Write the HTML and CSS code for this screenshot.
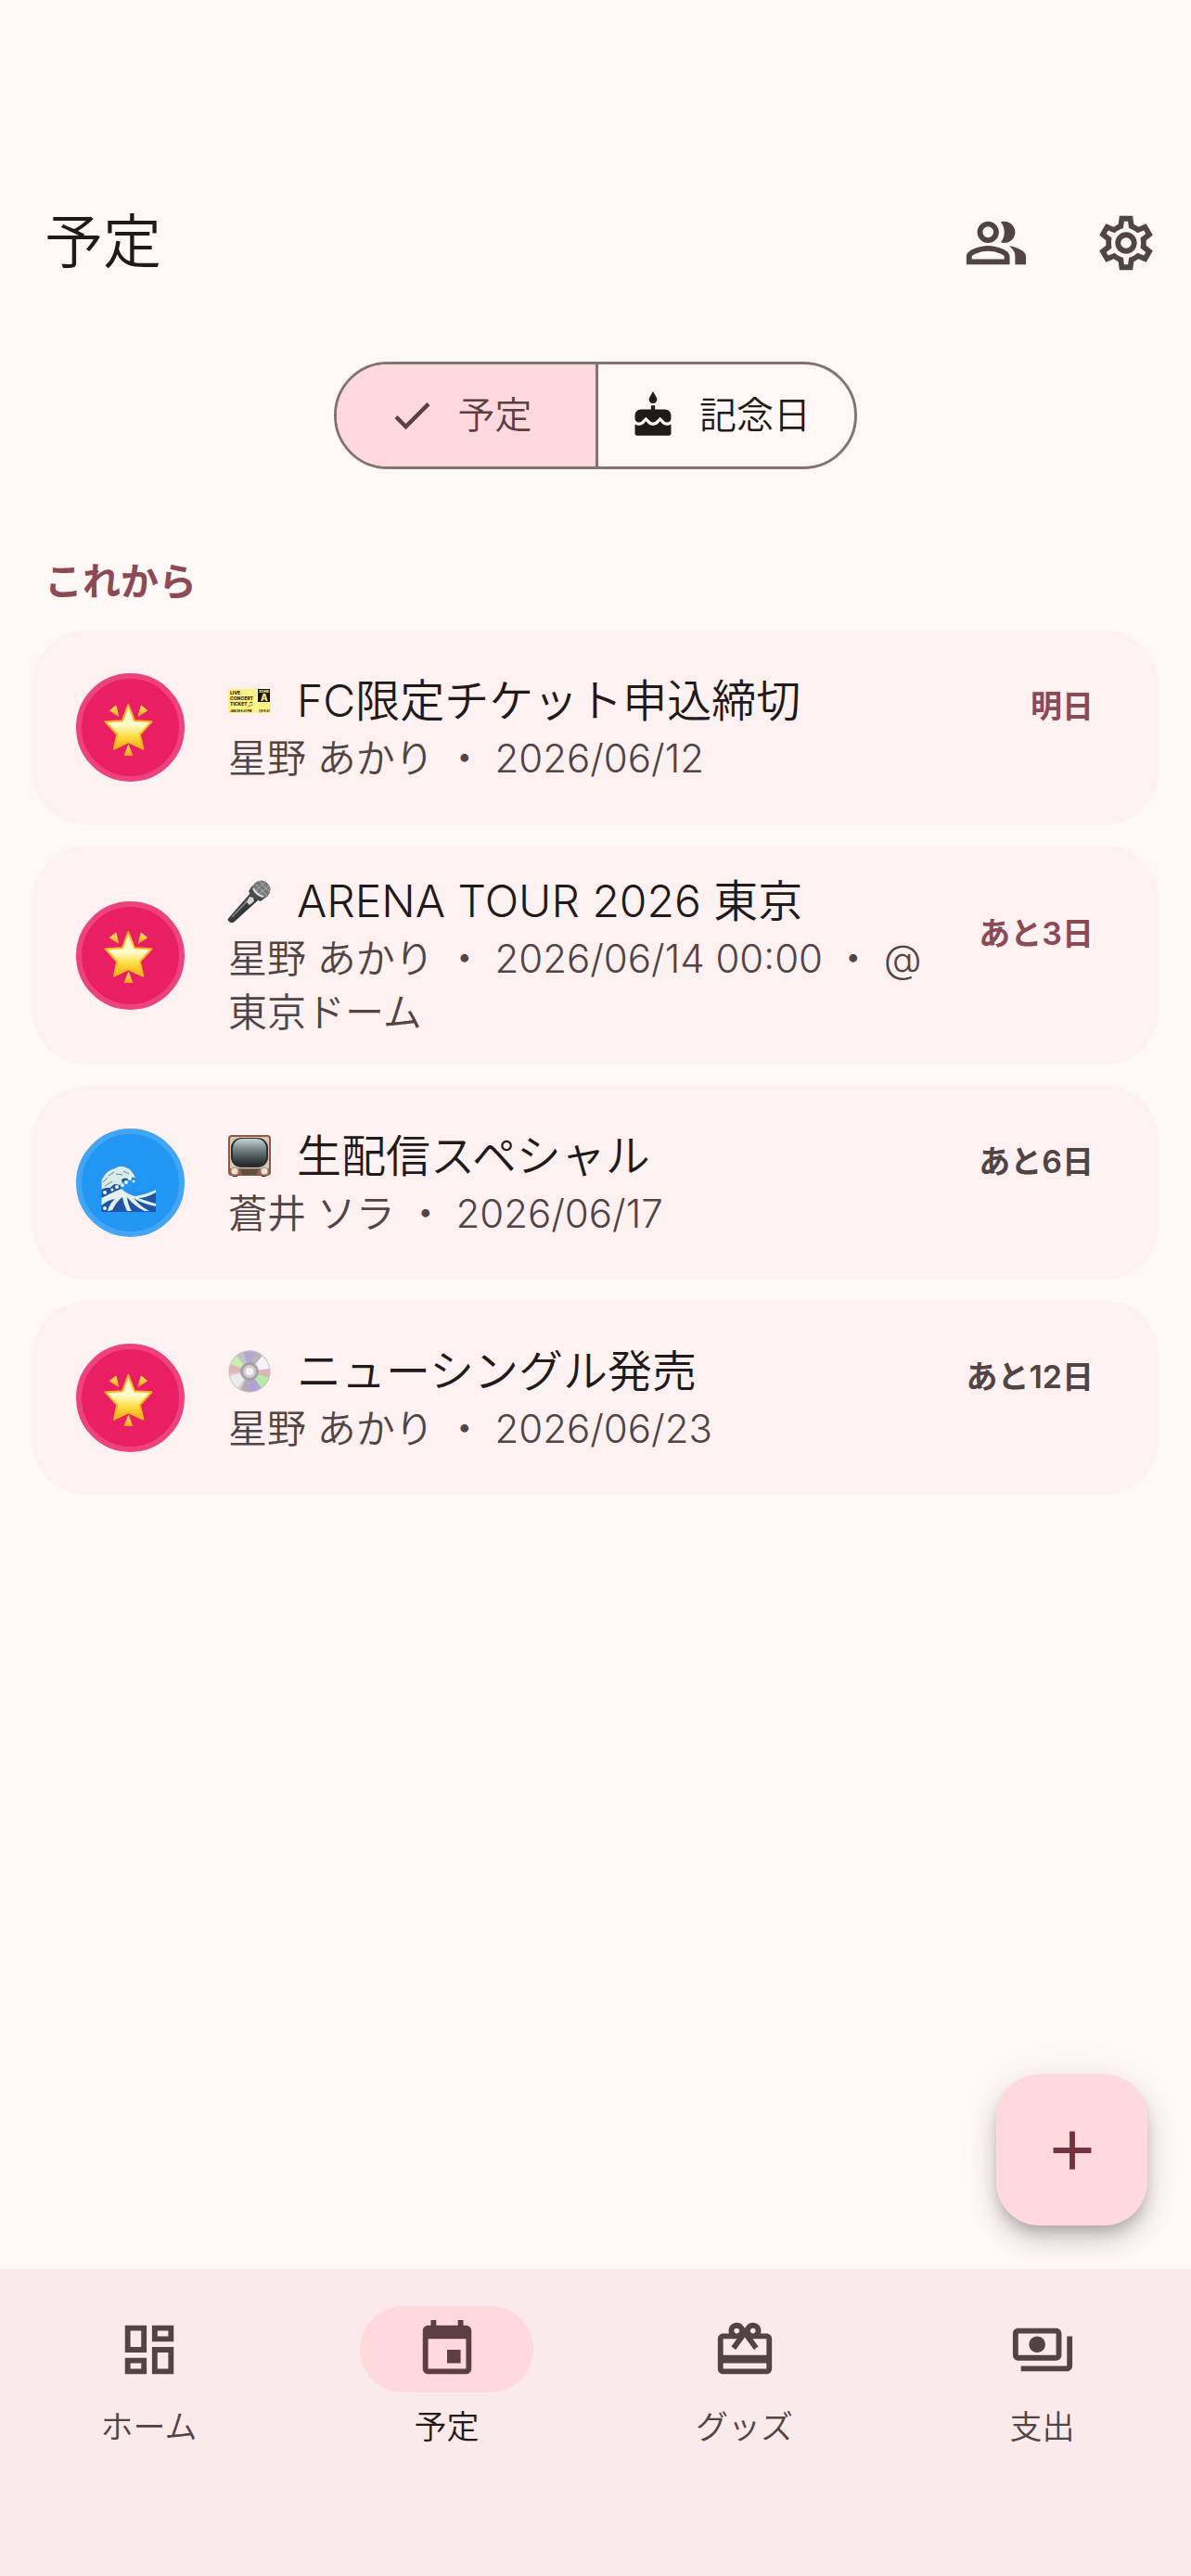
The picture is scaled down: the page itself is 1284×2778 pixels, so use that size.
FILE: index.html
```html
<!DOCTYPE html>
<html lang="ja">
<head>
<meta charset="utf-8">
<meta name="viewport" content="width=device-width, initial-scale=1">
<title>予定</title>
<link rel="stylesheet" href="styles.css">
</head>
<body>
<svg class="defs" aria-hidden="true">
  <defs>
    <linearGradient id="gold" x1="0" y1="0" x2="0" y2="1">
      <stop offset="0" stop-color="#fff6b8"/>
      <stop offset="0.45" stop-color="#fffbd0"/>
      <stop offset="0.7" stop-color="#fde047"/>
      <stop offset="1" stop-color="#f3a712"/>
    </linearGradient>
    <linearGradient id="ray" x1="0" y1="0" x2="0" y2="1">
      <stop offset="0" stop-color="#ffe45c"/>
      <stop offset="1" stop-color="#f0a81c"/>
    </linearGradient>
    <linearGradient id="screen" x1="0" y1="0" x2="0" y2="1">
      <stop offset="0" stop-color="#c3d3d2"/>
      <stop offset="0.45" stop-color="#6d7b7c"/>
      <stop offset="1" stop-color="#1f2526"/>
    </linearGradient>
    <linearGradient id="handle" x1="0" y1="0" x2="1" y2="1">
      <stop offset="0" stop-color="#77797b"/>
      <stop offset="0.5" stop-color="#3a3b3d"/>
      <stop offset="1" stop-color="#1d1e20"/>
    </linearGradient>
    <symbol id="star" viewBox="0 0 64 64">
      <g fill="url(#ray)" stroke="url(#ray)" stroke-width="1" stroke-linejoin="round">
        <path d="M9.300 13.200 16 8l2.700 11.300z"/>
        <path d="M49.700 13.200 43.300 8 40 19.300z"/>
        <path d="M29.500 50.500 33.700 61.500h-8.500z"/>
      </g>
      <path d="M29.300 7 36 24.200 54.500 25.200 41.800 39 45.400 54.600 29.300 47.300 14 54.600 17.200 39 4.500 25.200 23 24.200z" fill="url(#gold)" stroke="#f5b81e" stroke-width="2" stroke-linejoin="round"/>
    </symbol>
  </defs>
</svg>

<header class="app-bar">
  <h1 class="app-bar__title">予定</h1>
  <div class="app-bar__actions">
    <button class="icon-button" type="button" aria-label="メンバー">
      <svg class="icon" viewBox="0 0 24 24"><path d="M16.670 13.130C18.040 14.060 19 15.320 19 17v3h4v-3c0-2.180-3.570-3.470-6.330-3.870zM15 12c2.210 0 4-1.790 4-4s-1.790-4-4-4c-.47 0-.91.1-1.330.24C14.500 5.270 15 6.580 15 8s-.5 2.730-1.330 3.760c.42.14.86.24 1.330.24zM9 12c2.210 0 4-1.790 4-4s-1.790-4-4-4-4 1.790-4 4 1.790 4 4 4zm0-6c1.100 0 2 .9 2 2s-.9 2-2 2-2-.9-2-2 .9-2 2-2zM9 13c-2.670 0-8 1.340-8 4v3h16v-3c0-2.660-5.330-4-8-4zm6 5H3v-.99C3.200 16.290 6.300 15 9 15s5.800 1.290 6 2v1z"/></svg>
    </button>
    <button class="icon-button" type="button" aria-label="設定">
      <svg class="icon" viewBox="0 0 24 24"><path fill-rule="evenodd" d="M9.570 2H14.430L14.870 5.070 16.560 6.050 19.440 4.900 21.870 9.100 19.430 11.020V12.980L21.870 14.900 19.440 19.100 16.560 17.950 14.870 18.930 14.430 22H9.570L9.130 18.930 7.440 17.950 4.560 19.100 2.130 14.900 4.570 12.980V11.020L2.130 9.100 4.560 4.900 7.440 6.050 9.130 5.070zM17.450 11.270c.04.31.05.52.05.73 0 .21-.02.43-.05.73l-.14 1.130.89.7 1.080.84-.7 1.210-1.270-.51-1.040-.42-.9.68c-.43.32-.84.56-1.250.73l-1.060.43-.16 1.130-.2 1.350h-1.400l-.19-1.350-.16-1.130-1.060-.43c-.43-.18-.83-.41-1.230-.71l-.91-.7-1.060.43-1.270.51-.7-1.210 1.080-.84.89-.7-.14-1.130c-.03-.31-.05-.54-.05-.74s.02-.43.05-.73l.14-1.130-.89-.7-1.080-.84.7-1.210 1.270.51 1.040.42.9-.68c.43-.32.84-.56 1.250-.73l1.060-.43.16-1.130.2-1.350h1.390l.19 1.350.16 1.130 1.060.43c.43.18.83.41 1.230.71l.91.7 1.060-.43 1.270-.51.7 1.210-1.070.85-.89.7.14 1.130zM12 8a4 4 0 1 0 0 8 4 4 0 0 0 0-8zm0 6a2 2 0 1 1 0-4 2 2 0 0 1 0 4z"/></svg>
    </button>
  </div>
</header>

<main class="content">
  <div class="segmented" role="group" aria-label="表示の切り替え">
    <button class="segment segment--selected" type="button" aria-pressed="true">
      <svg class="segment__icon" viewBox="0 0 24 24"><path d="M9 16.170 4.830 12l-1.420 1.410L9 19 21 7l-1.410-1.410z"/></svg>
      <span class="segment__label">予定</span>
    </button>
    <button class="segment" type="button" aria-pressed="false">
      <svg class="segment__icon" viewBox="0 0 24 24"><path d="M12 6c1.110 0 2-.9 2-2 0-.38-.1-.73-.29-1.030L12 0l-1.710 2.970c-.19.3-.29.65-.29 1.030 0 1.100.9 2 2 2zm4.600 9.990-1.070-1.070-1.080 1.070c-1.300 1.300-3.580 1.310-4.890 0l-1.070-1.070-1.090 1.070C6.750 16.640 5.880 17 4.960 17c-.73 0-1.400-.23-1.960-.61V21c0 .55.45 1 1 1h16c.55 0 1-.45 1-1v-4.610c-.56.38-1.230.61-1.960.61-.92 0-1.790-.36-2.440-1.010zM18 9h-5V7h-2v2H6c-1.660 0-3 1.340-3 3v1.540c0 1.080.88 1.960 1.960 1.960.52 0 1.020-.2 1.380-.57l2.140-2.130 2.130 2.130c.74.74 2.030.74 2.770 0l2.140-2.130 2.130 2.130c.37.37.86.57 1.380.57 1.080 0 1.960-.88 1.960-1.960V12C21 10.340 19.660 9 18 9z"/></svg>
      <span class="segment__label">記念日</span>
    </button>
  </div>

  <h2 class="section-title">これから</h2>

  <ul class="events">
    <li class="card">
      <span class="avatar avatar--pink"><svg class="avatar__art" viewBox="0 0 64 64"><use href="#star"/></svg></span>
      <div class="card__body">
        <h3 class="card__title">
          <svg class="emoji" viewBox="0 0 46 46">
            <rect y="10" width="46" height="26" rx="1" fill="#fdf283"/>
            <rect x="32" y="10" width="13" height="14" fill="#16150f"/>
            <path d="M30 11v25" stroke="#fff" stroke-width="1" stroke-dasharray="2 2"/>
            <g class="ticket-text">
              <text x="2" y="16">LIVE</text>
              <text x="2" y="22">CONCERT</text>
              <text x="2" y="28">TICKET ♫</text>
              <text class="ticket-text__fine" x="2" y="35">JAN 28 9:41 PM</text>
              <text class="ticket-text__fine" x="33" y="35">1/9 9:41</text>
              <text class="ticket-text__zone" x="33" y="14">ZONE</text>
              <text class="ticket-text__letter" x="35" y="23">A</text>
            </g>
          </svg>
          <span>FC限定チケット申込締切</span>
        </h3>
        <p class="card__meta">星野 あかり ・ 2026/06/12</p>
      </div>
      <p class="badge badge--soon">明日</p>
    </li>

    <li class="card">
      <span class="avatar avatar--pink"><svg class="avatar__art" viewBox="0 0 64 64"><use href="#star"/></svg></span>
      <div class="card__body">
        <h3 class="card__title">
          <svg class="emoji" viewBox="0 0 46 46">
            <path d="M0 41.500 24 14 32 22 6 45.500Q3 47 1 45Q-1 43 0 41.500z" fill="url(#handle)"/>
            <path d="M4 40 24 19" stroke="#85878a" stroke-width="1.500"/>
            <circle cx="35.500" cy="10.500" r="10" fill="#77797b"/>
            <path d="M29 4 42 17M26 8 38 20M33 1 45 13M27 14 40 2M30 18 44 6" stroke="#a9abad" stroke-width="1"/>
            <path d="M26 6Q27 16 40 19L35 23Q24 20 22 12z" fill="#4a4b4e"/>
            <path d="M27 9Q30 16 38 18" fill="none" stroke="#dcdddf" stroke-width="2"/>
            <path d="M23 18l4 1 1 4-5 4-3-3z" fill="#d5d6d8"/>
          </svg>
          <span>ARENA TOUR 2026 東京</span>
        </h3>
        <p class="card__meta">星野 あかり ・ 2026/06/14 00:00 ・ @東京ドーム</p>
      </div>
      <p class="badge badge--soon">あと3日</p>
    </li>

    <li class="card">
      <span class="avatar avatar--blue">
        <svg class="avatar__art" viewBox="0 0 64 64">
          <path d="M.5 29Q5 18 15 16Q20 12 27 15Q36 18 37 28Q32 25 29 29Q23 29 22 34Q24 41 36 43Q50 42 59 35V63H.5z" fill="#1e56a5"/>
          <path d="M22 30Q24 41 36 43Q50 42 59 35V40Q48 46 38 46Q24 44 20 35z" fill="#2196f3"/>
          <path d="M.5 29Q5 18 15 16Q20 12 27 15Q34 17 37 27Q33 24 30 28Q26 25 22 28Q24 33 19 34Q14 31 10 37Q5 36 .5 39z" fill="#d9ebe8"/>
          <path d="M.5 48Q10 43 17 40L22 38Q28 44 37 46Q50 44 59 39V42Q48 48 40 48Q52 52 59 54V57Q44 54 35 48Q42 57 52 62L47 62Q36 57 28 47Q29 56 33 62H28Q24 54 23 47Q17 51 12 61L7 62Q9 54 15 49Q7 50 .5 56z" fill="#e4f1ee"/>
          <path d="M2 31l5-5M8 24l6-4M16 22l7 1M4 35l8-5M24 19l6 3" stroke="#5e8ba8" stroke-width="1"/>
          <g fill="#f2f8f6"><circle cx="31" cy="27" r="2"/><circle cx="35" cy="30" r="1.500"/><circle cx="27" cy="31" r="2"/><circle cx="23" cy="34" r="2"/><circle cx="17" cy="36" r="2"/><circle cx="4" cy="42" r="2"/><circle cx="12" cy="39" r="1.500"/><circle cx="4" cy="59" r="2"/></g>
        </svg>
      </span>
      <div class="card__body">
        <h3 class="card__title">
          <svg class="emoji" viewBox="0 0 46 46">
            <path d="M4 42h6v3H5zM36 42h6l-1 3h-5z" fill="#5d3427"/>
            <rect x="1" y="1" width="44" height="42" rx="3" fill="#d8cbb2" stroke="#925845" stroke-width="2"/>
            <rect x="3" y="3" width="40" height="32" rx="11" fill="#2b3132"/>
            <rect x="5" y="4" width="36" height="29" rx="10" fill="url(#screen)"/>
            <path d="M2 36h42v6H2z" fill="#9b6551"/>
            <path d="M13 37h20l-3 6H15z" fill="#5b5045"/>
            <circle cx="7" cy="39" r="4" fill="#ece3cf" stroke="#9f9482"/>
            <circle cx="39" cy="39" r="4" fill="#ece3cf" stroke="#9f9482"/>
          </svg>
          <span>生配信スペシャル</span>
        </h3>
        <p class="card__meta">蒼井 ソラ ・ 2026/06/17</p>
      </div>
      <p class="badge">あと6日</p>
    </li>

    <li class="card">
      <span class="avatar avatar--pink"><svg class="avatar__art" viewBox="0 0 64 64"><use href="#star"/></svg></span>
      <div class="card__body">
        <h3 class="card__title">
          <svg class="emoji" viewBox="0 0 46 46">
            <circle cx="23" cy="23" r="22.500" fill="#d3d3d5"/>
            <path d="M23 23 16 2A22 22 0 0 1 29 1z" fill="#b3a5d6"/>
            <path d="M23 23 29 1A22 22 0 0 1 37 6z" fill="#b5b5b7"/>
            <path d="M23 23 37 6A22 22 0 0 1 45 20z" fill="#f4f4f5"/>
            <path d="M23 23 45 20A22 22 0 0 1 44 30z" fill="#dfb4b6"/>
            <path d="M23 23 44 30A22 22 0 0 1 36 41z" fill="#b6eba5"/>
            <path d="M23 23 36 41A22 22 0 0 1 22 45z" fill="#b3a0d8"/>
            <path d="M23 23 22 45A22 22 0 0 1 13 43z" fill="#aeaeb0"/>
            <path d="M23 23 10 41A22 22 0 0 1 1 28z" fill="#ededee"/>
            <path d="M23 23 1 25A22 22 0 0 1 3 15z" fill="#dfb4b6"/>
            <path d="M23 23 3 15A22 22 0 0 1 9 6z" fill="#c6efa9"/>
            <path d="M23 23 9 6A22 22 0 0 1 16 2z" fill="#c3c3c6"/>
            <circle cx="23" cy="23" r="22" fill="none" stroke="#c2c2c4"/>
            <circle cx="23" cy="23" r="10" fill="#a3a1a6"/>
            <circle cx="23" cy="23" r="7" fill="#cfcdd1"/>
            <circle cx="23" cy="23" r="4" fill="#fdf1f1"/>
          </svg>
          <span>ニューシングル発売</span>
        </h3>
        <p class="card__meta">星野 あかり ・ 2026/06/23</p>
      </div>
      <p class="badge">あと12日</p>
    </li>
  </ul>

  <button class="fab" type="button" aria-label="予定を追加">
    <svg class="icon" viewBox="0 0 24 24"><path d="M19 13h-6v6h-2v-6H5v-2h6V5h2v6h6z"/></svg>
  </button>
</main>

<nav class="nav" aria-label="メイン">
  <a class="nav__item" href="#home">
    <span class="nav__pill"><svg class="icon" viewBox="0 0 24 24"><path d="M19 5v2h-4V5h4M9 5v6H5V5h4m10 8v6h-4v-6h4M9 17v2H5v-2h4M21 3h-8v6h8V3zM11 3H3v10h8V3zm10 8h-8v10h8V11zm-10 4H3v6h8v-6z"/></svg></span>
    ホーム
  </a>
  <a class="nav__item nav__item--current" href="#events" aria-current="page">
    <span class="nav__pill"><svg class="icon" viewBox="0 0 24 24"><path d="M17 12h-5v5h5v-5zM16 1v2H8V1H6v2H5c-1.110 0-1.990.9-1.990 2L3 19c0 1.100.89 2 2 2h14c1.100 0 2-.9 2-2V5c0-1.100-.9-2-2-2h-1V1h-2zm3 18H5V8h14v11z"/></svg></span>
    予定
  </a>
  <a class="nav__item" href="#goods">
    <span class="nav__pill"><svg class="icon" viewBox="0 0 24 24"><path d="M20 6h-2.180c.11-.31.18-.65.18-1 0-1.660-1.340-3-3-3-1.050 0-1.960.54-2.500 1.350l-.5.67-.5-.68C10.960 2.540 10.050 2 9 2 7.340 2 6 3.340 6 5c0 .35.07.69.18 1H4c-1.110 0-1.990.89-1.990 2L2 19c0 1.110.89 2 2 2h16c1.110 0 2-.89 2-2V8c0-1.110-.89-2-2-2zm-5-2c.55 0 1 .45 1 1s-.45 1-1 1-1-.45-1-1 .45-1 1-1zM9 4c.55 0 1 .45 1 1s-.45 1-1 1-1-.45-1-1 .45-1 1-1zm11 15H4v-2h16v2zm0-5H4V8h5.080L7 10.830 8.620 12 11 8.760l1-1.360 1 1.360L15.380 12 17 10.830 14.920 8H20v6z"/></svg></span>
    グッズ
  </a>
  <a class="nav__item" href="#expenses">
    <span class="nav__pill"><svg class="icon" viewBox="0 0 24 24"><path d="M19 14V6c0-1.100-.9-2-2-2H3c-1.100 0-2 .9-2 2v8c0 1.100.9 2 2 2h14c1.100 0 2-.9 2-2zm-2 0H3V6h14v8zm-7-7c-1.660 0-3 1.340-3 3s1.340 3 3 3 3-1.340 3-3-1.340-3-3-3zm13 0v11c0 1.100-.9 2-2 2H4v-2h17V7h2z"/></svg></span>
    支出
  </a>
</nav>
</body>
</html>
```
FILE: styles.css
```css
:root {
  --surface: #fff8f7;
  --card: #fdf1f1;
  --bar: #faeaeb;
  --accent: #ffd9de;
  --primary: #8e4957;
  --text: #22191b;
  --muted: #524345;
  --outline: #847375;
}

* {
  box-sizing: border-box;
}

body {
  margin: 0;
  min-height: 100vh;
  display: flex;
  flex-direction: column;
  background: var(--surface);
  color: var(--text);
  font-family: Inter, "Noto Sans CJK JP", sans-serif;
  font-weight: 350;
}

h1, h2, h3, p, ul {
  margin: 0;
  padding: 0;
  font-weight: inherit;
}

button {
  margin: 0;
  padding: 0;
  border: 0;
  background: none;
  color: inherit;
  font: inherit;
}

.defs {
  position: absolute;
  width: 0;
  height: 0;
}

.icon {
  display: block;
  width: 70px;
  height: 70px;
  fill: currentColor;
}

/* Top bar */
.app-bar {
  display: flex;
  align-items: center;
  justify-content: space-between;
  padding: 180px 0 0 48px;
}

.app-bar__title {
  padding-bottom: 3px;
  font-size: 63px;
  line-height: 160px;
}

.app-bar__actions {
  display: flex;
  color: var(--muted);
}

.icon-button {
  display: grid;
  place-items: center;
  width: 140px;
  height: 140px;
}

/* Main area */
.content {
  position: relative;
  flex: 1;
  display: flex;
  flex-direction: column;
  padding: 47px 35px 48px;
}

.segmented {
  align-self: center;
  display: grid;
  grid-template-columns: 1fr 1fr;
  border: 3px solid var(--outline);
  border-radius: 58px;
  overflow: hidden;
}

.segment {
  display: flex;
  align-items: center;
  justify-content: center;
  gap: 24px;
  height: 110px;
  padding: 0 47px 0 33px;
  font-size: 40px;
}

.segment + .segment {
  border-left: 3px solid var(--outline);
}

.segment--selected {
  background: var(--accent);
  color: #5c3f43;
}

.segment__icon {
  width: 52px;
  height: 52px;
  fill: currentColor;
}

.segment__label {
  padding-bottom: 6px;
}

.section-title {
  padding: 92px 0 24px 13px;
  color: var(--primary);
  font-size: 41px;
  font-weight: 600;
  line-height: 58px;
}

.events {
  display: flex;
  flex-direction: column;
  gap: 23px;
  list-style: none;
}

.card {
  display: flex;
  align-items: center;
  min-height: 209px;
  padding: 27px 70px 27px 47px;
  border-radius: 58px;
  background: var(--card);
}

.avatar {
  flex: none;
  display: grid;
  place-items: center;
  width: 117px;
  height: 117px;
  border: 6px solid;
  border-radius: 50%;
}

.avatar--pink {
  background: #e91e63;
  border-color: #ed427d;
}

.avatar--blue {
  background: #2196f3;
  border-color: #42a5f5;
}

.avatar__art {
  width: 64px;
  height: 64px;
}

.card__body {
  flex: 1;
  min-width: 0;
  padding: 0 32px 0 47px;
}

.card__title {
  display: flex;
  align-items: center;
  gap: 28px;
  font-size: 48px;
  line-height: 66px;
}

.emoji {
  flex: none;
  width: 46px;
  height: 46px;
  overflow: visible;
}

.ticket-text {
  font-size: 5px;
  font-weight: 800;
  fill: #2a2814;
}

.ticket-text__fine {
  font-size: 3px;
}

.ticket-text__zone {
  font-size: 4px;
  fill: #fdf283;
}

.ticket-text__letter {
  font-size: 10px;
  fill: #fdf283;
}

.card__meta {
  color: var(--muted);
  font-size: 42px;
  line-height: 58px;
}

.badge {
  flex: none;
  padding-bottom: 46px;
  color: var(--muted);
  font-size: 34px;
  font-weight: 600;
  line-height: 46px;
}

.badge--soon {
  color: var(--primary);
}

.fab {
  position: absolute;
  right: 47px;
  bottom: 47px;
  display: grid;
  place-items: center;
  width: 163px;
  height: 163px;
  border-radius: 47px;
  background: var(--accent);
  color: #72333f;
  box-shadow: 0 9px 15px -3px rgba(0, 0, 0, 0.2), 0 17px 29px rgba(0, 0, 0, 0.14), 0 3px 52px rgba(0, 0, 0, 0.06);
}

/* Bottom navigation */
.nav {
  position: relative;
  display: grid;
  grid-template-columns: repeat(4, 1fr);
  padding: 40px 0 136px;
  background: var(--bar);
}

.nav__item {
  display: flex;
  flex-direction: column;
  align-items: center;
  gap: 12px;
  color: var(--muted);
  font-size: 35px;
  line-height: 50px;
  text-decoration: none;
}

.nav__item--current {
  color: var(--text);
}

.nav__pill {
  display: grid;
  place-items: center;
  width: 187px;
  height: 93px;
  border-radius: 47px;
}

.nav__item--current .nav__pill {
  background: var(--accent);
  color: #5c3f43;
}
```
